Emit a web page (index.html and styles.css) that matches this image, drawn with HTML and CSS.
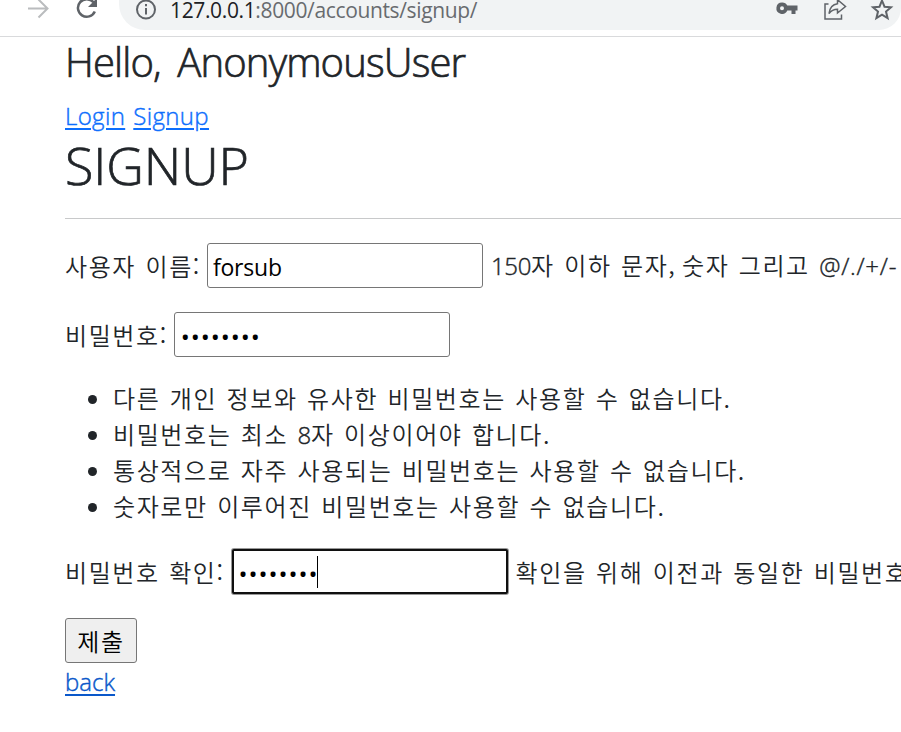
FILE: index.html
```
<!DOCTYPE html>
<html lang="ko">
<head>
<meta charset="utf-8">
<title>Signup</title>
<link rel="stylesheet" href="styles.css">
</head>
<body>
<header class="toolbar">
  <svg class="forward" width="22" height="36" viewBox="0 0 22 36" fill="none" stroke="#babcbe" stroke-width="2"><path d="M0 8.500H19M10.500-.5 19.500 8.500 10.500 17.500"/></svg>
  <svg class="reload" width="24" height="36" viewBox="0 0 24 36"><path d="M17.500 2.300A8.800 8.800 0 1 0 18.800 11.500" fill="none" stroke="#5f6368" stroke-width="2.500"/><path d="M21-2V7H12Z" fill="#5f6368"/></svg>
  <div class="address">
    <svg class="info" width="22" height="30" viewBox="0 0 22 30"><circle cx="11" cy="9.500" r="9" fill="none" stroke="#5f6368" stroke-width="2"/><path d="M10 4h2v2.300h-2zM10 8h2v6.500h-2z" fill="#5f6368"/></svg>
    <span class="url"><span class="host">127.0.0.1</span>:8000/accounts/signup/</span>
    <svg class="key" width="23" height="30" viewBox="0 0 23 30"><path fill="#5f6368" fill-rule="evenodd" d="M6 2.500a5.700 5.700 0 1 0 5.300 8H15.500V14h4v-3.500h2v-5H11.300A5.700 5.700 0 0 0 6 2.500Zm0 3.700a2 2 0 1 1 0 4 2 2 0 0 1 0-4Z"/></svg>
    <svg class="share" width="24" height="30" viewBox="0 0 24 30" fill="none" stroke="#5f6368" stroke-width="1.500"><path d="M4.500 4H1V19H17.500V14.500"/><path d="M5 13.500C5.700 7.500 8.700 4.300 13.500 3.700V-.3L21.500 6.500 13.500 13V9.200C9.700 9.200 7 10.700 5 13.500Z"/></svg>
    <svg class="star" width="24" height="30" viewBox="0 0 24 30"><path d="M12 .5 14.500 6.700 21 7.200 16 11.600 17.600 18.200 12 14.700 6.400 18.200 8 11.600 3 7.200 9.500 6.700Z" fill="none" stroke="#5f6368" stroke-width="2"/></svg>
  </div>
</header>
<main class="page">
  <h3 class="greeting">Hello, AnonymousUser</h3>
  <nav class="links"><a href="#">Login</a> <a href="#" class="signup">Signup</a></nav>
  <h1 class="title">SIGNUP</h1>
  <hr>
  <form>
    <div class="row">
      <label for="username">사용자 이름:</label>
      <input id="username" type="text" value="forsub">
      <span class="help"><span class="num">150</span>자 이하 문자<span class="comma">,</span> 숫자 그리고 <span class="signs">@/./+/-</span></span>
    </div>
    <div class="row">
      <label for="password1">비밀번호:</label>
      <input id="password1" type="password" value="password">
    </div>
    <ul>
      <li>다른 개인 정보와 유사한 비밀번호는 사용할 수 없습니다.</li>
      <li>비밀번호는 최소 <span class="num">8</span>자 이상이어야 합니다.</li>
      <li>통상적으로 자주 사용되는 비밀번호는 사용할 수 없습니다.</li>
      <li>숫자로만 이루어진 비밀번호는 사용할 수 없습니다.</li>
    </ul>
    <div class="row confirm">
      <label for="password2">비밀번호 확인:</label>
      <span class="field"><input id="password2" class="active" type="password" value="password"><i class="caret"></i></span>
      <span class="help">확인을 위해 이전과 동일한 비밀번호</span>
    </div>
    <button type="button">제출</button>
  </form>
  <a href="#" class="back">back</a>
</main>
</body>
</html>
```
FILE: styles.css
```
* { box-sizing: border-box; }
html, body { margin: 0; overflow: hidden; }
body {
  width: 901px;
  height: 732px;
  background: #fff;
  color: #212529;
  font: 350 24px/36px "Open Sans", "Noto Sans CJK KR", sans-serif;
}
.toolbar {
  display: flex;
  height: 37px;
  border-bottom: 1px solid #d9dadc;
  padding-left: 28px;
}
svg { display: block; flex: none; overflow: visible; }
.reload { margin-left: 26px; }
.address {
  display: flex;
  width: 784px;
  height: 30px;
  margin-left: 19px;
  padding-left: 16px;
  background: #f1f3f4;
  border-radius: 0 0 22px 26px;
}
.url {
  flex: none;
  width: 330px;
  margin-left: 13px;
  color: #686b6f;
  font: 400 21px/20px "Open Sans", sans-serif;
  letter-spacing: -0.36px;
  white-space: nowrap;
}
.host { color: #202124; }
.key { margin-left: 276px; }
.share { margin-left: 25px; }
.star { margin-left: 22px; }
.page { padding-left: 65px; white-space: nowrap; overflow: hidden; }
h1, h3, ul, hr { margin: 0; font-weight: 350; }
.greeting, .title, .links, .back, .num, .signs { -webkit-text-stroke: 0.4px currentColor; }
.greeting { font-size: 40px; line-height: 50px; height: 61px; letter-spacing: -0.85px; word-spacing: 7px; -webkit-text-stroke-width: 0.7px; }
.links { height: 36px; letter-spacing: 0.35px; word-spacing: 1.5px; }
a { color: #0d6efd; text-decoration: underline; text-underline-offset: 3px; text-decoration-thickness: 2px; }
.title { font-size: 52px; line-height: 62px; height: 84px; letter-spacing: -0.1px; -webkit-text-stroke-width: 0.7px; }
hr { border: 0; border-top: 1px solid #c8c9ca; margin-bottom: 24px; }
.row { display: flex; align-items: center; height: 45px; margin-bottom: 24px; }
label, .help, li, button { font-family: "Noto Sans CJK KR", sans-serif; letter-spacing: 1.6px; word-spacing: 1.1px; }
.num, .signs { font-family: "Open Sans", sans-serif; letter-spacing: -0.3px; }
.signs { letter-spacing: 0.7px; }
.comma { letter-spacing: -2.3px; }
label { margin-right: 6px; }
input {
  width: 276px;
  height: 45px;
  flex: none;
  border: 1px solid #767676;
  border-radius: 3px;
  padding: 3px 5px 0;
  background: #fff;
  color: #000;
  font: 400 23px/36px "Open Sans", sans-serif;
  outline: 0;
}
#username { letter-spacing: -0.2px; }
#password1, #password2 { font-size: 24px; letter-spacing: 0.95px; padding-top: 4px; padding-left: 6px; }
.help { margin-left: 8px; }
.field { position: relative; display: flex; }
#password2.active { border: 2px solid #101010; box-shadow: 0 0 0 1px #999; border-radius: 2px; padding-left: 5px; }
.confirm label { margin-right: 7px; }
.caret { position: absolute; left: 85px; top: 7px; width: 1px; height: 32px; background: #000; }
ul { padding-left: 48px; margin-top: -1px; margin-bottom: 25px; }
li { height: 36px; }
button {
  display: block;
  width: 72px;
  height: 45px;
  border: 1px solid #767676;
  border-radius: 3px;
  background: #efefef;
  color: #000;
  padding: 0;
  font-size: 24px;
  font-weight: 350;
}
.back { display: inline-block; margin-top: 1px; color: #0a58ca; }
```
